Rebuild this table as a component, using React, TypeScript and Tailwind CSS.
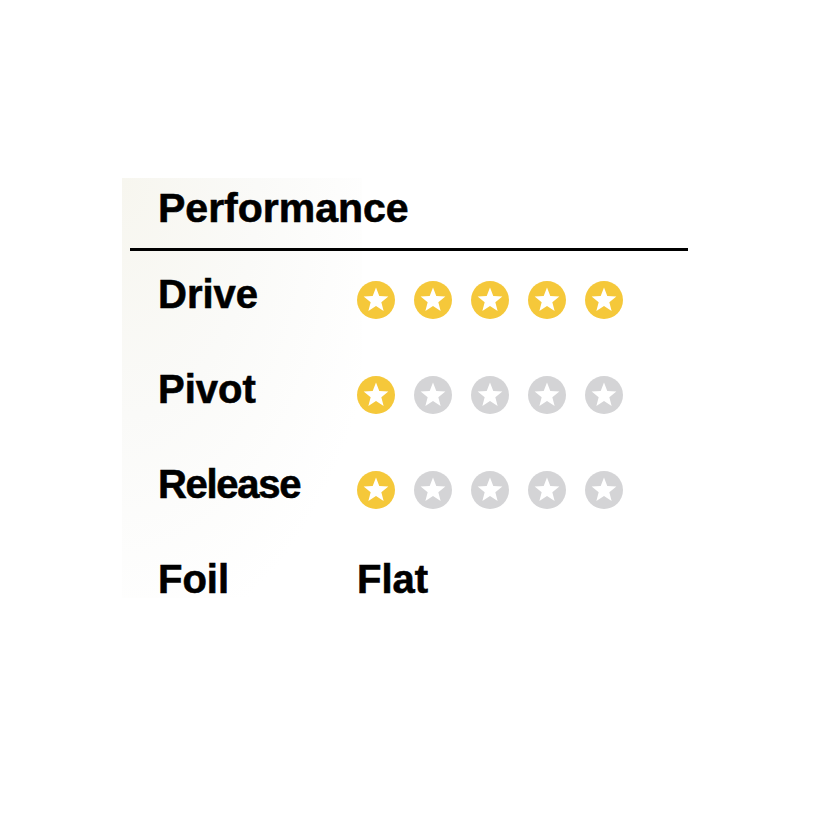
import React from "react";

const font = { fontFamily: '"Liberation Sans", Arial, Helvetica, sans-serif' };

function Star({ on }: { on: boolean }) {
  return (
    <svg width="38" height="38" viewBox="0 0 38 38" className="shrink-0">
      <circle cx="19" cy="19" r="19" fill={on ? "#f5c83a" : "#d4d4d6"} />
      <polygon
        fill="#ffffff"
        points="19,6.5 22.29,14.97 31.36,15.48 24.33,21.23 26.64,30.02 19,25.1 11.36,30.02 13.67,21.23 6.64,15.48 15.71,14.97"
      />
    </svg>
  );
}

function Stars({ n }: { n: number }) {
  return (
    <div className="flex gap-[19px] mt-[7px]">
      {[0, 1, 2, 3, 4].map((i) => (
        <Star key={i} on={i < n} />
      ))}
    </div>
  );
}

const bold = "text-[40px] leading-[40px] font-bold text-black [-webkit-text-stroke:0.6px_#000]";

function Row({ label, children, tight }: { label: string; children: React.ReactNode; tight?: boolean }) {
  return (
    <div className="flex items-start h-[95px] pl-[158px]">
      <div className={"w-[199px] shrink-0 " + bold + (tight ? " tracking-[-1.3px]" : "")}>{label}</div>
      {children}
    </div>
  );
}

export default function App() {
  return (
    <div className="relative w-[820px] h-[820px] bg-white overflow-hidden" style={font}>
      <div className="absolute left-[122px] top-[178px] w-[240px] h-[420px] bg-[radial-gradient(ellipse_at_top_left,#f7f6ef_0%,#fafaf8_40%,rgba(255,255,255,0)_80%)]" />
      <div className="relative pt-[188px]">
        <div className={"pl-[158px] " + bold + " text-[41px]"}>Performance</div>
        <div className="ml-[130px] mt-[20px] w-[558px] h-[3px] bg-black" />
        <div className="mt-[23px]">
          <Row label="Drive">
            <Stars n={5} />
          </Row>
          <Row label="Pivot">
            <Stars n={1} />
          </Row>
          <Row label="Release" tight>
            <Stars n={1} />
          </Row>
          <Row label="Foil">
            <div className={bold}>Flat</div>
          </Row>
        </div>
      </div>
    </div>
  );
}
